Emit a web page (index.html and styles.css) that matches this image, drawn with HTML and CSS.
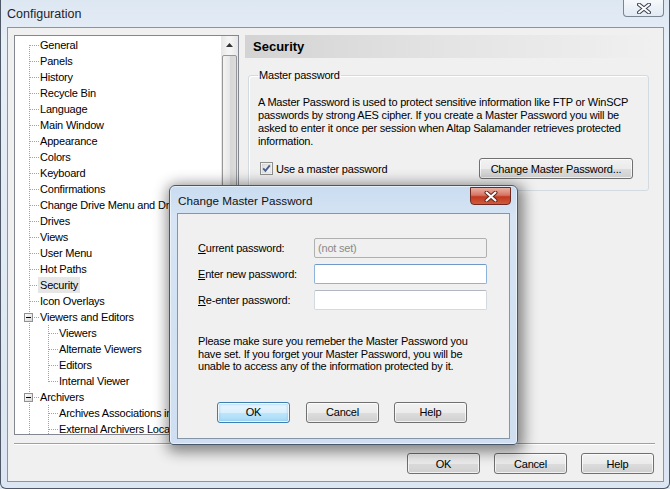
FILE: index.html
```html
<!DOCTYPE html>
<html>
<head>
<meta charset="utf-8">
<title>Configuration</title>
<link rel="stylesheet" href="styles.css">
</head>
<body>
<div class="window">
  <div class="titlebar">
    <span class="wtitle">Configuration</span>
    <span class="wclose"><svg width="14" height="11" viewBox="0 0 14 11"><path d="M2 1.5 L12 9.5 M12 1.5 L2 9.5" stroke="#3a4452" stroke-width="4" stroke-linecap="round"/><path d="M2 1.5 L12 9.5 M12 1.5 L2 9.5" stroke="#fff" stroke-width="2" stroke-linecap="round"/></svg></span>
  </div>
  <div class="client">
    <div class="main">
      <div class="tree">
        <div class="list">
          <div class="row root first"><span class="gut"></span><span class="lbl">General</span></div>
          <div class="row root"><span class="gut"></span><span class="lbl">Panels</span></div>
          <div class="row root"><span class="gut"></span><span class="lbl">History</span></div>
          <div class="row root"><span class="gut"></span><span class="lbl">Recycle Bin</span></div>
          <div class="row root"><span class="gut"></span><span class="lbl">Language</span></div>
          <div class="row root"><span class="gut"></span><span class="lbl">Main Window</span></div>
          <div class="row root"><span class="gut"></span><span class="lbl">Appearance</span></div>
          <div class="row root"><span class="gut"></span><span class="lbl">Colors</span></div>
          <div class="row root"><span class="gut"></span><span class="lbl">Keyboard</span></div>
          <div class="row root"><span class="gut"></span><span class="lbl">Confirmations</span></div>
          <div class="row root"><span class="gut"></span><span class="lbl">Change Drive Menu and Drive Bars</span></div>
          <div class="row root"><span class="gut"></span><span class="lbl">Drives</span></div>
          <div class="row root"><span class="gut"></span><span class="lbl">Views</span></div>
          <div class="row root"><span class="gut"></span><span class="lbl">User Menu</span></div>
          <div class="row root"><span class="gut"></span><span class="lbl">Hot Paths</span></div>
          <div class="row root"><span class="gut"></span><span class="lbl sel">Security</span></div>
          <div class="row root"><span class="gut"></span><span class="lbl">Icon Overlays</span></div>
          <div class="row root"><span class="gut"><svg class="exp" width="9" height="9" viewBox="0 0 9 9"><defs><linearGradient id="eg" x1="0" y1="0" x2="1" y2="1"><stop offset="0" stop-color="#fff"/><stop offset="1" stop-color="#d6d6d6"/></linearGradient></defs><rect x="0.5" y="0.5" width="8" height="8" fill="url(#eg)" stroke="#919191"/><path d="M2 4.5 H7" stroke="#000"/></svg></span><span class="lbl">Viewers and Editors</span></div>
          <div class="row child"><span class="gut"></span><span class="lbl">Viewers</span></div>
          <div class="row child"><span class="gut"></span><span class="lbl">Alternate Viewers</span></div>
          <div class="row child"><span class="gut"></span><span class="lbl">Editors</span></div>
          <div class="row child last"><span class="gut"></span><span class="lbl">Internal Viewer</span></div>
          <div class="row root"><span class="gut"><svg class="exp" width="9" height="9" viewBox="0 0 9 9"><rect x="0.5" y="0.5" width="8" height="8" fill="url(#eg)" stroke="#919191"/><path d="M2 4.5 H7" stroke="#000"/></svg></span><span class="lbl">Archivers</span></div>
          <div class="row child"><span class="gut"></span><span class="lbl">Archives Associations in Panels</span></div>
          <div class="row child"><span class="gut"></span><span class="lbl">External Archivers Locations</span></div>
        </div>
        <div class="vscroll">
          <div class="sbtn"><svg width="7" height="4" viewBox="0 0 7 4"><path d="M0 4 L3.5 0 L7 4 Z" fill="#333"/></svg></div>
          <div class="thumb"></div>
        </div>
      </div>
      <div class="panel">
        <div class="phead">Security</div>
        <fieldset class="group">
          <legend>Master password</legend>
          <p class="info">A Master Password is used to protect sensitive information like FTP or WinSCP<br>passwords by strong AES cipher. If you create a Master Password you will be<br>asked to enter it once per session when Altap Salamander retrieves protected<br>information.</p>
          <div class="checkrow">
            <svg class="chk" width="13" height="13" viewBox="0 0 13 13"><defs><linearGradient id="cg" x1="0" y1="0" x2="1" y2="1"><stop offset="0" stop-color="#dcdcdc"/><stop offset="1" stop-color="#fbfbfb"/></linearGradient></defs><rect x="0.5" y="0.5" width="12" height="12" fill="#fff" stroke="#8e8f8f"/><rect x="2" y="2" width="9" height="9" fill="url(#cg)" stroke="#c6c6c6" stroke-width="0.5"/><path d="M3.2 6.4 L5.4 8.8 L9.8 3.4" fill="none" stroke="#4a5f8e" stroke-width="1.9"/></svg>
            <span class="chklbl">Use a master password</span>
            <button class="btn wide">Change Master Password...</button>
          </div>
        </fieldset>
      </div>
    </div>
    <div class="sep"></div>
    <div class="btnrow">
      <button class="btn">OK</button>
      <button class="btn">Cancel</button>
      <button class="btn">Help</button>
    </div>
  </div>

  <div class="dialog">
    <div class="dtitlebar">
      <span class="dtitle">Change Master Password</span>
      <span class="dclose"><svg width="14" height="11" viewBox="0 0 14 11"><path d="M2.5 1.5 L11.5 9.5 M11.5 1.5 L2.5 9.5" stroke="#5a2a22" stroke-width="4" stroke-linecap="round"/><path d="M2.5 1.5 L11.5 9.5 M11.5 1.5 L2.5 9.5" stroke="#fff" stroke-width="2" stroke-linecap="round"/></svg></span>
    </div>
    <div class="dclient">
      <div class="form">
        <label class="flabel"><u>C</u>urrent password:</label>
        <div class="field disabled">(not set)</div>
        <label class="flabel"><u>E</u>nter new password:</label>
        <div class="field focus"></div>
        <label class="flabel"><u>R</u>e-enter password:</label>
        <div class="field"></div>
      </div>
      <p class="dinfo">Please make sure you remeber the Master Password you<br>have set. If you forget your Master Password, you will be<br>unable to access any of the information protected by it.</p>
      <div class="dbtnrow">
        <button class="btn def">OK</button>
        <button class="btn">Cancel</button>
        <button class="btn">Help</button>
      </div>
    </div>
  </div>
</div>
</body>
</html>
```

FILE: styles.css
```css
html, body {
  margin: 0;
  padding: 0;
}
body {
  width: 670px;
  height: 489px;
  overflow: hidden;
  font-family: "Liberation Sans", Arial, sans-serif;
  font-size: 11px;
  letter-spacing: -0.2px;
  color: #000;
  background: #dfe8f2;
}
.window {
  --v: repeating-linear-gradient(to bottom, #a2a2a2 0 1px, transparent 1px 2px);
  --h: repeating-linear-gradient(to right, #a2a2a2 0 1px, transparent 1px 2px);
  position: relative;
  width: 670px;
  height: 489px;
  box-sizing: border-box;
  border: 1px solid #4e5866;
  border-top: none;
  border-radius: 0 0 6px 6px;
  background: linear-gradient(to bottom, #dde7f2 0, #e6eef7 40px, #dbe6f2 100%);
  display: flex;
  flex-direction: column;
}
.titlebar {
  height: 27px;
  flex: none;
  display: flex;
  align-items: flex-start;
}
.wtitle {
  padding: 7px 0 0 6px;
  font-size: 12.5px;
  letter-spacing: 0;
  color: #1b2330;
}
.wclose {
  margin-left: auto;
  margin-right: 5px;
  width: 39px;
  height: 16px;
  border: 1px solid #7a8593;
  border-top: none;
  border-radius: 0 0 4px 4px;
  background: linear-gradient(to bottom, rgba(255,255,255,.75), rgba(225,233,243,.6));
  display: flex;
  align-items: center;
  justify-content: center;
}
.client {
  flex: 1;
  margin: 0 5px 6px 6px;
  border: 1px solid #8796a7;
  background: #f0f0f0;
  padding: 7px 8px 0 6px;
  display: flex;
  flex-direction: column;
}
.main {
  display: flex;
  gap: 6px;
  height: 400px;
}
.tree {
  width: 225px;
  flex: none;
  box-sizing: border-box;
  border: 1px solid #828790;
  background: #fff;
  display: flex;
}
.list {
  flex: 1;
  overflow: hidden;
  padding-top: 1px;
}
.row {
  height: 16px;
  display: flex;
  align-items: center;
  background-repeat: no-repeat;
}
.root {
  background-image: var(--v), var(--h);
  background-size: 1px 16px, 9px 1px;
  background-position: 14px 0, 15px 8px;
}
.root.first {
  background-size: 1px 8px, 9px 1px;
  background-position: 14px 8px, 15px 8px;
}
.child {
  background-image: var(--v), var(--v), var(--h);
  background-size: 1px 16px, 1px 16px, 9px 1px;
  background-position: 14px 0, 33px 0, 34px 8px;
}
.child.last {
  background-size: 1px 16px, 1px 9px, 9px 1px;
}
.gut {
  width: 23px;
  height: 16px;
  flex: none;
  display: flex;
  align-items: flex-start;
}
.child .gut {
  width: 42px;
}
.exp {
  display: block;
  margin: 4px 0 0 9px;
}
.lbl {
  padding: 0 2px;
  line-height: 16px;
  white-space: nowrap;
}
.sel {
  background: #e6e6e6;
}
.vscroll {
  width: 17px;
  flex: none;
  background: linear-gradient(to right, #e6e6e6, #f4f4f4 40%, #f4f4f4 60%, #e6e6e6);
  display: flex;
  flex-direction: column;
  align-items: center;
}
.sbtn {
  width: 17px;
  height: 17px;
  display: flex;
  align-items: center;
  justify-content: center;
}
.thumb {
  margin-top: 2px;
  width: 15px;
  height: 340px;
  box-sizing: border-box;
  border: 1px solid #979797;
  border-radius: 2px;
  background: linear-gradient(to right, #f3f3f3, #e8e8e8 50%, #d6d6d6 51%, #dcdcdc);
}
.panel {
  width: 410px;
  flex: none;
  display: flex;
  flex-direction: column;
}
.phead {
  height: 23px;
  line-height: 23px;
  padding-left: 8px;
  font-size: 13px;
  letter-spacing: 0;
  font-weight: bold;
  background: linear-gradient(to right, #d3d3d3, #e4e4e4 50%, #f0f0f0);
}
.group {
  margin: 11px 6px 0 3px;
  padding: 0 9px 11px 9px;
  border: 1px solid #d3dbe2;
  border-radius: 3px;
  box-shadow: inset 1px 1px 0 #fff;
  min-width: 0;
}
.group legend {
  padding: 0 1px;
  line-height: 13px;
}
.info {
  margin: 14px 0 0 0;
  line-height: 13px;
  white-space: nowrap;
}
.checkrow {
  margin-top: 10px;
  display: flex;
  align-items: center;
  height: 21px;
}
.chk {
  display: block;
  margin-left: 2px;
}
.chklbl {
  margin-left: 3px;
}
.btn {
  font-family: "Liberation Sans", Arial, sans-serif;
  font-size: 11px;
  letter-spacing: -0.2px;
  color: #000;
  width: 73px;
  height: 21px;
  padding: 0;
  box-sizing: border-box;
  border: 1px solid #707070;
  border-radius: 3px;
  background: linear-gradient(to bottom, #f2f2f2 0, #ebebeb 50%, #dddddd 51%, #cfcfcf 100%);
  box-shadow: inset 0 0 0 1px rgba(255,255,255,.7);
}
.btn.wide {
  width: 154px;
  margin-left: auto;
  margin-right: 6px;
}
.sep {
  margin-top: 8px;
  height: 1px;
  background: #a0a0a0;
  border-bottom: 1px solid #fff;
}
.btnrow {
  margin-top: 8px;
  display: flex;
  justify-content: flex-end;
  gap: 14px;
  padding-right: 1px;
}
.dialog {
  position: absolute;
  left: 168px;
  top: 185px;
  width: 349px;
  height: 260px;
  box-sizing: border-box;
  border: 1px solid #4a5768;
  border-radius: 6px 6px 4px 4px;
  background: linear-gradient(to bottom, #c9dcf0 0, #d6e4f4 30px, #cfdff1 100%);
  box-shadow: 0 0 0 1px rgba(255,255,255,.5) inset, 2px 3px 14px 4px rgba(0,0,0,.45);
  display: flex;
  flex-direction: column;
}
.dtitlebar {
  height: 27px;
  flex: none;
  display: flex;
  align-items: flex-start;
}
.dtitle {
  padding: 8px 0 0 8px;
  font-size: 11.7px;
  letter-spacing: 0;
  color: #111;
}
.dclose {
  margin: 1px 6px 0 auto;
  width: 39px;
  height: 16px;
  border: 1px solid #6e2a20;
  border-radius: 0 0 4px 4px;
  background: linear-gradient(to bottom, #eab0a3 0, #d77563 45%, #c2391f 55%, #cf5a3c 100%);
  display: flex;
  align-items: center;
  justify-content: center;
}
.dclient {
  flex: 1;
  margin: 0 7px 5px 7px;
  border: 1px solid #8595a8;
  background: #f0f0f0;
  padding: 24px 0 0 20px;
  display: flex;
  flex-direction: column;
}
.form {
  display: grid;
  grid-template-columns: 116px 173px;
  grid-auto-rows: 20px;
  row-gap: 6px;
  align-items: center;
}
.flabel u {
  text-decoration: underline;
}
.field {
  height: 20px;
  box-sizing: border-box;
  border: 1px solid #d3d9e1;
  border-top-color: #b3b8c0;
  background: #fff;
  padding-left: 3px;
  line-height: 18px;
  border-radius: 2px;
}
.field.disabled {
  background: #f0f0f0;
  border-color: #b0b0b0;
  color: #8a8a8a;
}
.field.focus {
  border-color: #8fb2da;
  border-top-color: #6e98c8;
}
.dinfo {
  margin: 25px 0 0 0;
  line-height: 12.5px;
  white-space: nowrap;
}
.dbtnrow {
  margin-top: 29px;
  padding-left: 19px;
  display: flex;
  gap: 15px;
}
.btn.def {
  border-color: #3c7fb1;
  background: linear-gradient(to bottom, #eaf6fd 0, #d9f0fc 50%, #bee6fd 51%, #a7d9f5 100%);
  box-shadow: inset 0 0 0 1px rgba(255,255,255,.8), inset 0 0 2px 2px rgba(120,190,240,.35);
  margin-right: 1px;
}
```
